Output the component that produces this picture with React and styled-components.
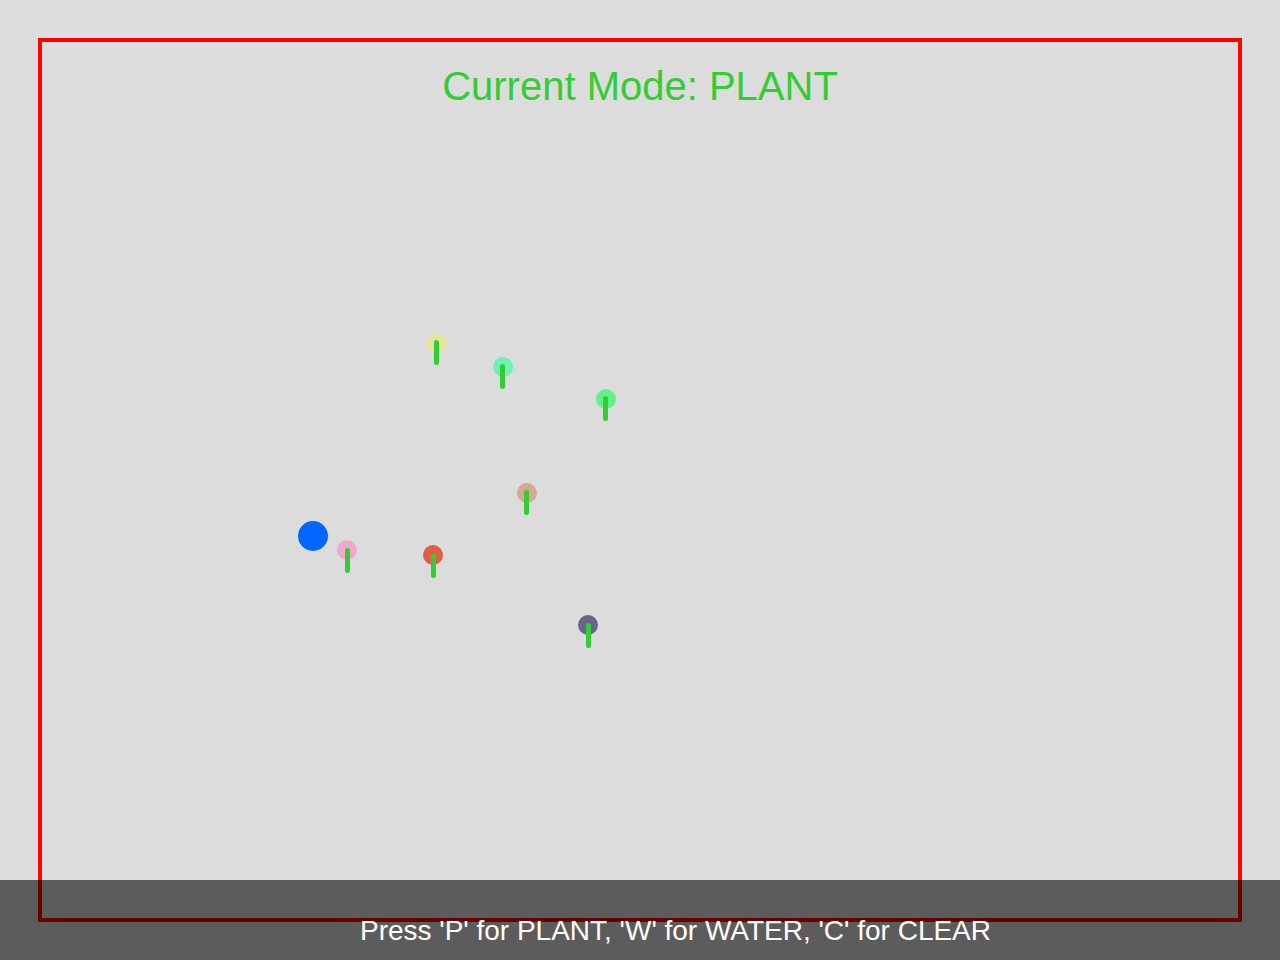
import React from "react";
import styled, { createGlobalStyle } from "styled-components";

const Global = createGlobalStyle`
  html, body {
    margin: 0;
    padding: 0;
    background: #dcdcdc;
    font-family: "Liberation Sans", Arial, sans-serif;
  }
  #root {
    min-height: 960px;
  }
`;

const Page = styled.div`
  width: 1280px;
  height: 960px;
  position: relative;
  overflow: hidden;
  background: #dcdcdc;
  padding-top: 38px;
  box-sizing: border-box;
`;

const Stage = styled.div`
  position: relative;
  width: 1204px;
  height: 884px;
  margin: 0 auto;
  border: 4px solid #ff0000;
  box-sizing: border-box;
  display: flex;
  flex-direction: column;
  align-items: center;
`;

const Title = styled.h1`
  margin: 0;
  padding-top: 24px;
  font-family: "Liberation Sans", Arial, sans-serif;
  font-weight: normal;
  font-size: 40px;
  line-height: 40px;
  color: #32cd32;
`;

const PlantSpot = styled.div`
  position: absolute;
  width: 0;
  height: 0;
`;

const Bloom = styled.div`
  position: absolute;
  left: -10px;
  top: -10px;
  width: 20px;
  height: 20px;
  border-radius: 50%;
  background: ${(p) => p.$color};
`;

const Stem = styled.div`
  position: absolute;
  left: -2.5px;
  top: -2.5px;
  width: 5px;
  height: 25px;
  border-radius: 2.5px;
  background: #32cd32;
`;

const Drop = styled.div`
  position: absolute;
  width: 30px;
  height: 30px;
  margin: -15px 0 0 -15px;
  border-radius: 50%;
  background: #0066ff;
`;

const HelpBar = styled.div`
  position: absolute;
  left: 0;
  right: 0;
  bottom: 0;
  height: 80px;
  box-sizing: border-box;
  background: rgba(0, 0, 0, 0.58);
  display: flex;
  justify-content: center;
  align-items: flex-start;
  padding: 37px 0 0 71px;
`;

const HelpText = styled.span`
  font-family: "Liberation Sans", Arial, sans-serif;
  font-size: 28px;
  line-height: 28px;
  color: #ffffff;
  white-space: nowrap;
`;

const INNER_X = 42;
const INNER_Y = 42;

const plants = [
  { x: 436.7, y: 342.7, color: "#e6e69a" },
  { x: 502.7, y: 366.7, color: "#6ef0b6" },
  { x: 605.7, y: 398.7, color: "#60f08c" },
  { x: 526.7, y: 492.7, color: "#d6a898" },
  { x: 347.3, y: 550.3, color: "#f0a8cc" },
  { x: 433.3, y: 555, color: "#dc5f48" },
  { x: 588.3, y: 625, color: "#6c6486" },
];

export default function App() {
  return (
    <>
      <Global />
      <Page>
        <Stage>
          <Title>Current Mode: PLANT</Title>
          <Drop style={{ left: 313.3 - INNER_X, top: 536 - INNER_Y }} />
          {plants.map((p, i) => (
            <PlantSpot key={i} style={{ left: p.x - INNER_X, top: p.y - INNER_Y }}>
              <Bloom $color={p.color} />
              <Stem />
            </PlantSpot>
          ))}
        </Stage>
        <HelpBar>
          <HelpText>Press 'P' for PLANT, 'W' for WATER, 'C' for CLEAR</HelpText>
        </HelpBar>
      </Page>
    </>
  );
}
